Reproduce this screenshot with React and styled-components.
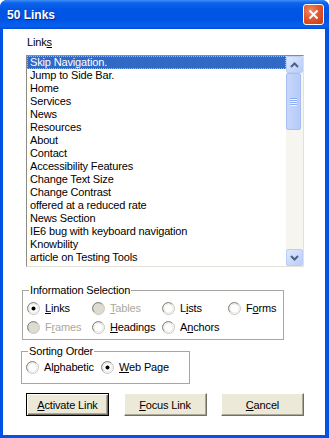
import styled, { createGlobalStyle } from "styled-components";

const GlobalStyle = createGlobalStyle`
  html, body {
    margin: 0;
    padding: 0;
    background: #ffffff;
  }
  body {
    font-family: "Liberation Sans", Arial, sans-serif;
    font-size: 11px;
    letter-spacing: -0.15px;
    color: #000;
  }
`;

const Window = styled.div`
  width: 329px;
  height: 438px;
  display: flex;
  flex-direction: column;
  background: #0053e4;
  border-radius: 7px 7px 0 0;
  overflow: hidden;
`;

const TitleBar = styled.div`
  height: 29px;
  flex: none;
  display: flex;
  align-items: center;
  justify-content: space-between;
  padding: 0 5px 0 7px;
  background: linear-gradient(
    #3d8ff6 0px,
    #0f62ec 3px,
    #0056e6 9px,
    #0054e3 20px,
    #0860ef 26px,
    #004bd6 29px
  );
  color: #fff;
  font-weight: bold;
  font-size: 12px;
  letter-spacing: 0;
  text-shadow: 1px 1px #0a2a8a;
`;

const CloseButton = styled.div`
  width: 21px;
  height: 21px;
  box-sizing: border-box;
  border: 1px solid #fff;
  border-radius: 3px;
  background: radial-gradient(circle at 35% 30%, #f08a66 0%, #e2582f 45%, #c33c15 100%);
  display: flex;
  align-items: center;
  justify-content: center;
`;

const Body = styled.div`
  flex: 1;
  margin: 0 4px 3px 3px;
  background: #fff;
  padding: 7px 0 0 18px;
  display: flex;
  flex-direction: column;
  align-items: flex-start;
`;

const Key = styled.span`
  text-decoration: underline;
`;

const FieldLabel = styled.div`
  margin-left: 6px;
  line-height: 13px;
`;

const ListBox = styled.div`
  margin: 6px 0 0 5px;
  width: 278px;
  height: 212px;
  box-sizing: border-box;
  border: 1px solid;
  border-color: #8d8b82 #e3e1d8 #e3e1d8 #8d8b82;
  display: flex;
  background: #fff;
`;

const Items = styled.div`
  flex: 1;
  overflow: hidden;
`;

const Item = styled.div`
  height: 13px;
  line-height: 13px;
  padding-left: 3px;
  white-space: nowrap;
  background: ${(p) => (p.$selected ? "#316ac5" : "transparent")};
  color: ${(p) => (p.$selected ? "#fff" : "#000")};
  outline: ${(p) => (p.$selected ? "1px dotted #e9b24d" : "none")};
  outline-offset: -1px;
`;

const ScrollBar = styled.div`
  width: 17px;
  flex: none;
  background: #f6f5ef;
  display: flex;
  flex-direction: column;
  justify-content: space-between;
`;

const ScrollButton = styled.div`
  width: 17px;
  height: 17px;
  box-sizing: border-box;
  border: 1px solid #bccdf7;
  border-radius: 2px;
  background: linear-gradient(135deg, #dfe8fd, #b9cdf8);
  display: flex;
  align-items: center;
  justify-content: center;
`;

const Thumb = styled.div`
  width: 15px;
  height: 57px;
  box-sizing: border-box;
  border: 1px solid #a9bff3;
  border-radius: 2px;
  background: linear-gradient(90deg, #c7d6fb, #b6cbf8);
  display: flex;
  flex-direction: column;
  align-items: center;
  justify-content: center;
  gap: 1px;
`;

const Grip = styled.div`
  width: 7px;
  height: 1px;
  background: #8eaef3;
  box-shadow: 0 1px #eef3fe;
`;

const Track = styled.div`
  flex: 1;
`;

const Group = styled.fieldset`
  margin: ${(p) => p.$mt}px 0 0 ${(p) => p.$ml}px;
  width: ${(p) => p.$w}px;
  box-sizing: border-box;
  border: 1px solid #a7a6a0;
  padding: 0;
  min-inline-size: 0;
`;

const Legend = styled.legend`
  margin-left: 6px;
  padding: 0 1px;
  line-height: 13px;
`;

const RadioGrid = styled.div`
  display: grid;
  grid-template-columns: ${(p) => p.$cols};
  row-gap: 6px;
  padding: ${(p) => p.$pad};
`;

const RadioItem = styled.div`
  display: flex;
  align-items: center;
  gap: 5px;
  height: 13px;
  line-height: 13px;
  white-space: nowrap;
  color: ${(p) => (p.$disabled ? "#aca899" : "#000")};
`;

const ButtonRow = styled.div`
  margin: 9px 0 0 5px;
  width: 278px;
  display: flex;
  justify-content: space-between;
`;

const Button = styled.div`
  width: 83px;
  height: 23px;
  box-sizing: border-box;
  display: flex;
  align-items: center;
  justify-content: center;
  background: #ece9d8;
  border: 1px solid;
  border-color: ${(p) => (p.$default ? "#000" : "#fff #716f64 #716f64 #fff")};
  box-shadow: ${(p) =>
    p.$default
      ? "inset 1px 1px #fff, inset -1px -1px #716f64, inset -2px -2px #aca899"
      : "inset -1px -1px #aca899"};
`;

function RadioMark({ checked, disabled }) {
  return (
    <svg width="13" height="13" viewBox="0 0 13 13">
      <circle cx="6.5" cy="6.5" r="6" fill={disabled ? "#dedcd1" : "#fff"} stroke="#c9c7bd" />
      <path d="M2.3 10.2A5.5 5.5 0 0 1 10.2 2.3" fill="none" stroke="#85847d" />
      {!disabled && <circle cx="6.5" cy="6.5" r="4.6" fill="none" stroke="#e6e4dc" />}
      {checked && <circle cx="6.5" cy="6.5" r="2" fill="#000" />}
    </svg>
  );
}

function Radio({ label, k, checked, disabled }) {
  const i = label.indexOf(k);
  return (
    <RadioItem $disabled={disabled}>
      <RadioMark checked={checked} disabled={disabled} />
      <span>
        {label.slice(0, i)}
        <Key>{k}</Key>
        {label.slice(i + 1)}
      </span>
    </RadioItem>
  );
}

const links = [
  "Skip Navigation.",
  "Jump to Side Bar.",
  "Home",
  "Services",
  "News",
  "Resources",
  "About",
  "Contact",
  "Accessibility Features",
  "Change Text Size",
  "Change Contrast",
  "offered at a reduced rate",
  "News Section",
  "IE6 bug with keyboard navigation",
  "Knowbility",
  "article on Testing Tools",
];

export default function App() {
  return (
    <>
      <GlobalStyle />
      <Window>
        <TitleBar>
          <span>50 Links</span>
          <CloseButton>
            <svg width="11" height="11" viewBox="0 0 11 11">
              <path d="M1.5 1.5L9.5 9.5M9.5 1.5L1.5 9.5" stroke="#fff" strokeWidth="2" />
            </svg>
          </CloseButton>
        </TitleBar>
        <Body>
          <FieldLabel>
            Link<Key>s</Key>
          </FieldLabel>
          <ListBox>
            <Items>
              {links.map((l, i) => (
                <Item key={l} $selected={i === 0}>
                  {l}
                </Item>
              ))}
            </Items>
            <ScrollBar>
              <div>
                <ScrollButton>
                  <svg width="9" height="6" viewBox="0 0 9 6">
                    <path d="M1 5L4.5 1.5L8 5" fill="none" stroke="#4d6185" strokeWidth="2" />
                  </svg>
                </ScrollButton>
                <Thumb>
                  <Grip />
                  <Grip />
                  <Grip />
                  <Grip />
                </Thumb>
              </div>
              <Track />
              <ScrollButton>
                <svg width="9" height="6" viewBox="0 0 9 6">
                  <path d="M1 1L4.5 4.5L8 1" fill="none" stroke="#4d6185" strokeWidth="2" />
                </svg>
              </ScrollButton>
            </ScrollBar>
          </ListBox>

          <Group $mt={17} $ml={1} $w={262}>
            <Legend>Information Selection</Legend>
            <RadioGrid $cols="65px 70px 66px auto" $pad="5px 0 5px 4px">
              <Radio label="Links" k="L" checked />
              <Radio label="Tables" k="T" disabled />
              <Radio label="Lists" k="i" />
              <Radio label="Forms" k="o" />
              <Radio label="Frames" k="r" disabled />
              <Radio label="Headings" k="H" />
              <Radio label="Anchors" k="n" />
            </RadioGrid>
          </Group>

          <Group $mt={5} $ml={0} $w={169}>
            <Legend>Sorting Order</Legend>
            <RadioGrid $cols="75px auto" $pad="3px 0 9px 4px">
              <Radio label="Alphabetic" k="p" />
              <Radio label="Web Page" k="W" checked />
            </RadioGrid>
          </Group>

          <ButtonRow>
            <Button $default>
              <span>
                <Key>A</Key>ctivate Link
              </span>
            </Button>
            <Button>
              <span>
                <Key>F</Key>ocus Link
              </span>
            </Button>
            <Button>
              <span>
                <Key>C</Key>ancel
              </span>
            </Button>
          </ButtonRow>
        </Body>
      </Window>
    </>
  );
}
